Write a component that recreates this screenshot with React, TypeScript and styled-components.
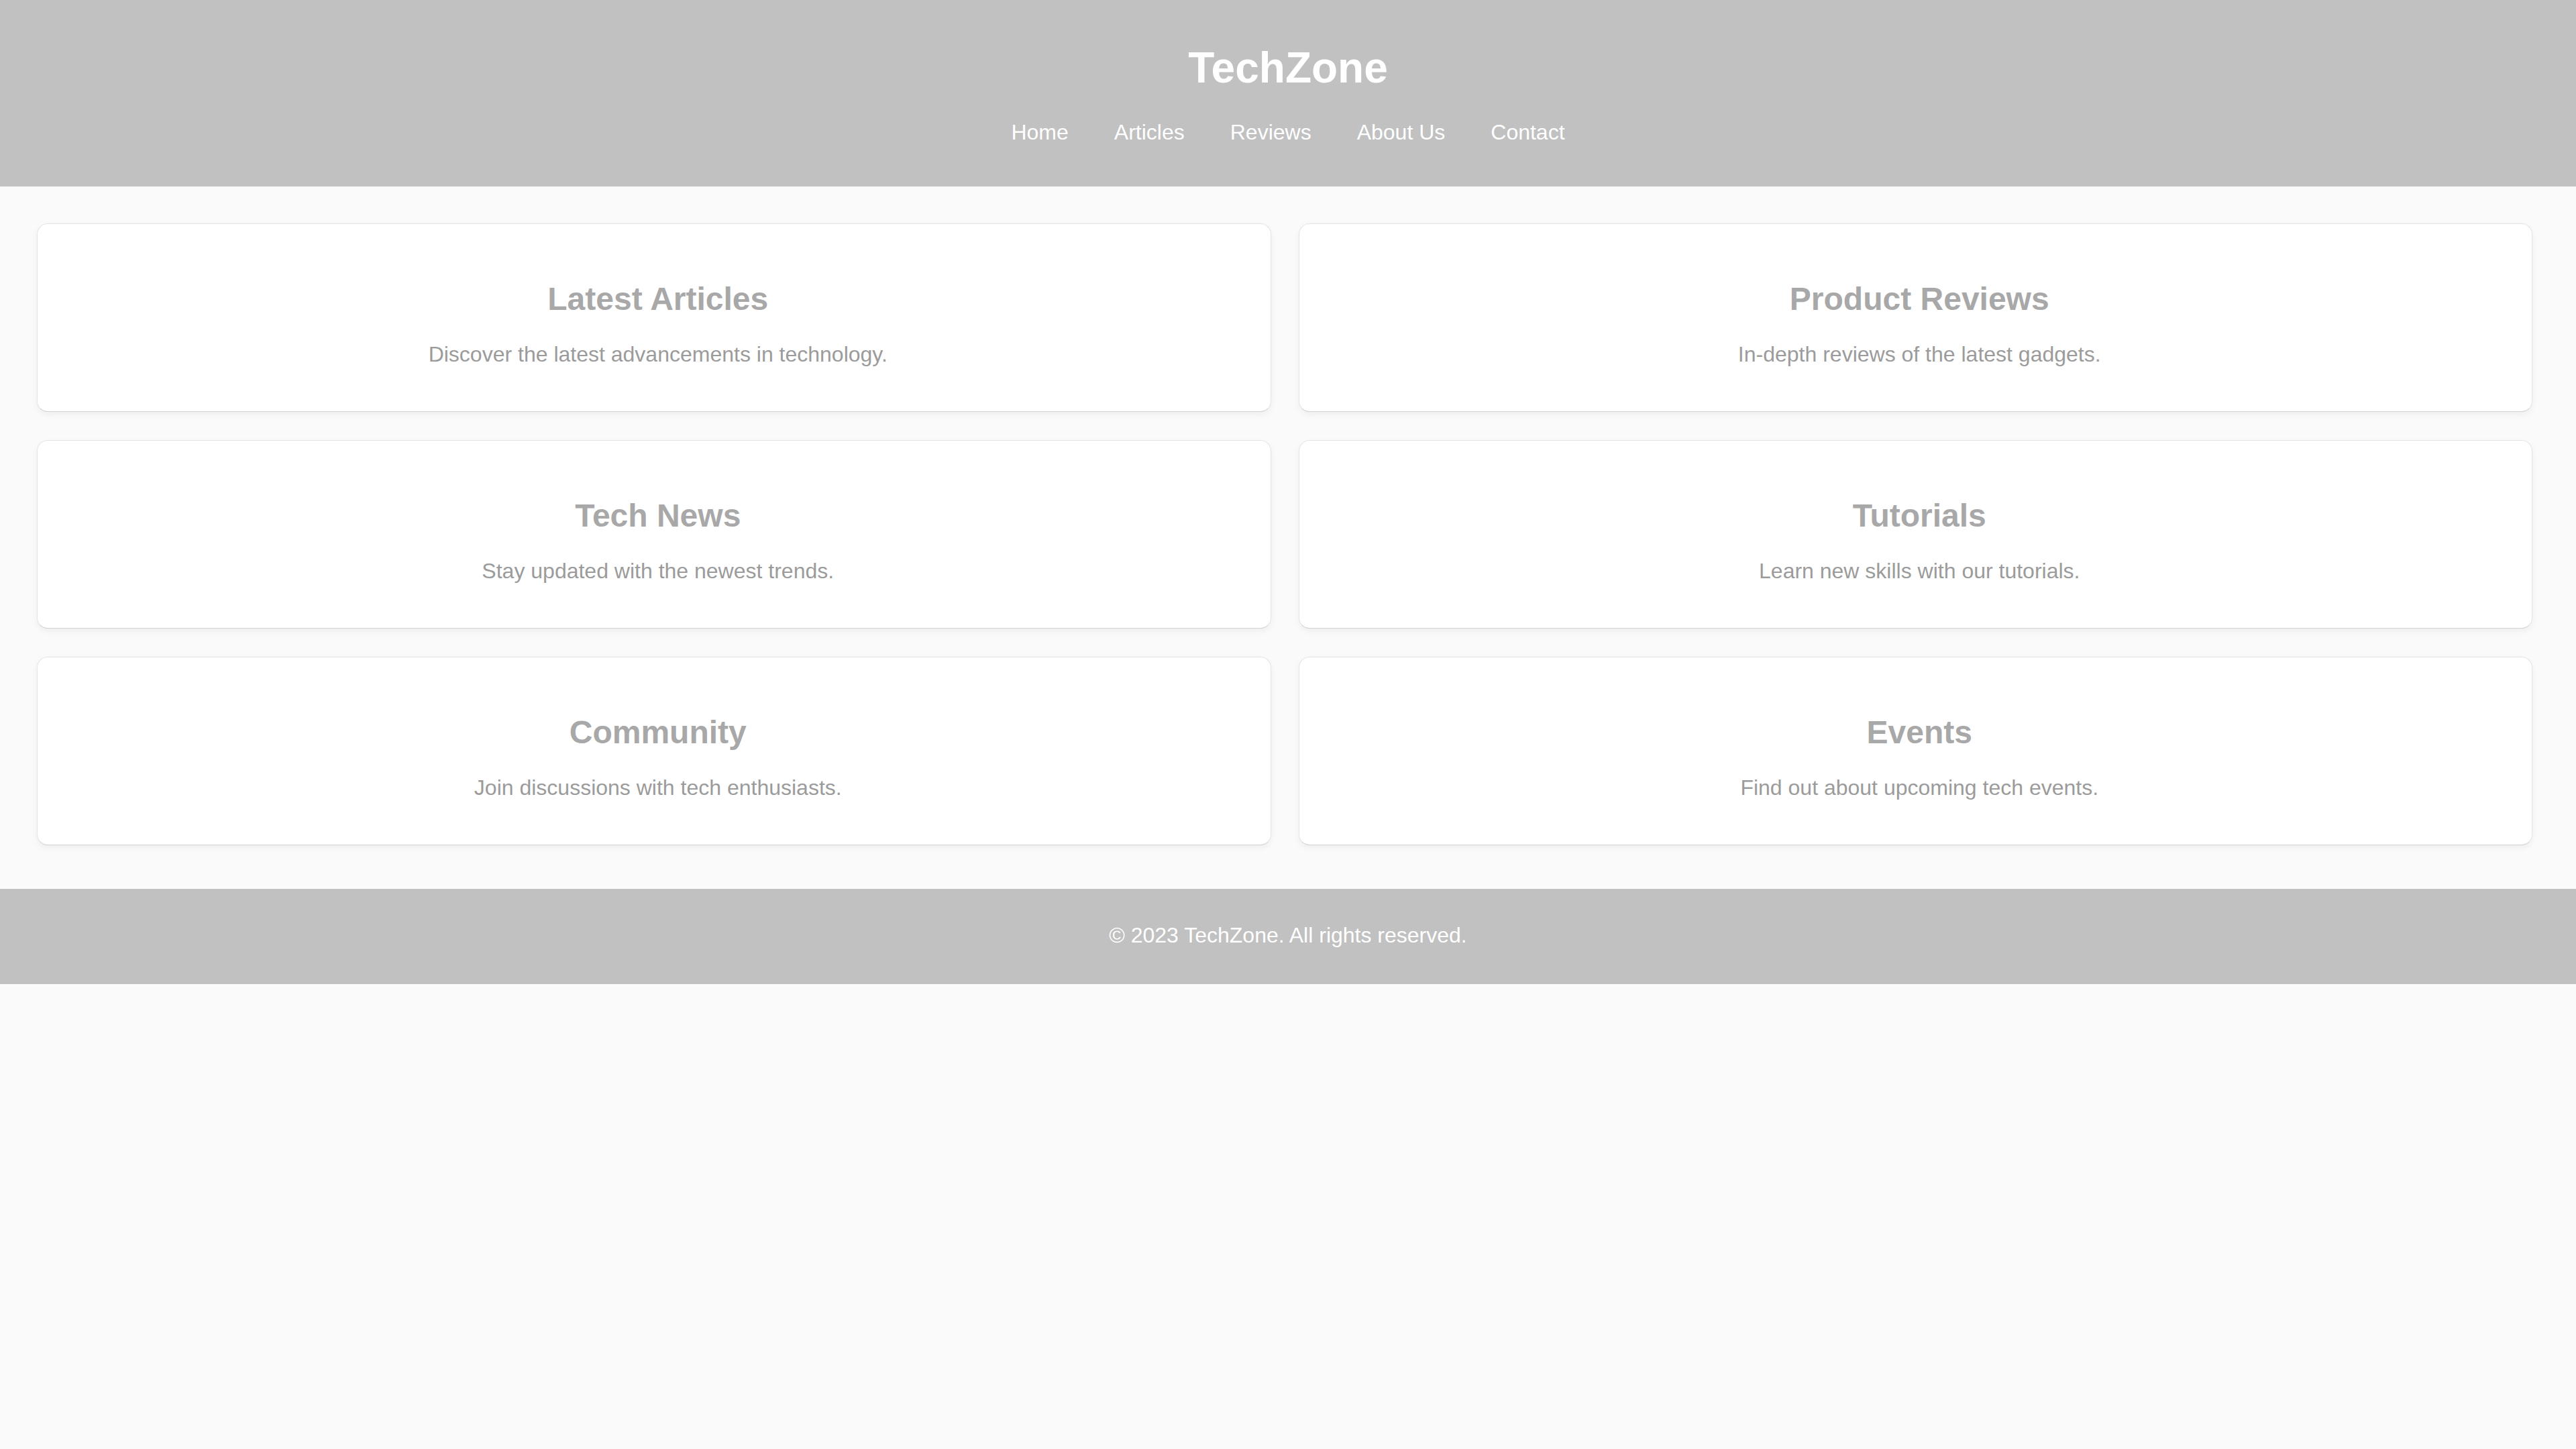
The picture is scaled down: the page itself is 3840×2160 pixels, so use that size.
import styled, { createGlobalStyle } from "styled-components";

const GlobalStyle = createGlobalStyle`
  html, body {
    margin: 0;
    padding: 0;
    background-color: #fafafa;
    font-family: "Liberation Sans", Arial, sans-serif;
  }
`;

const Header = styled.header`
  background-color: #c1c1c1;
  color: #ffffff;
  text-align: center;
  padding: 64px 0 62px;
`;

const Title = styled.h1`
  margin: 0 0 41px;
  font-size: 64px;
  font-weight: 700;
`;

const Nav = styled.nav`
  display: flex;
  justify-content: center;
  gap: 68px;
`;

const NavLink = styled.a`
  color: #ffffff;
  font-size: 32px;
  text-decoration: none;
  cursor: pointer;
`;

const Main = styled.main`
  display: grid;
  grid-template-columns: 1fr 1fr;
  gap: 42px 41px;
  padding: 55px 65px 65px 55px;
`;

const Card = styled.section`
  background-color: #ffffff;
  border: 1px solid #e4e4e4;
  border-bottom-color: #d2d2d2;
  border-radius: 16px;
  box-shadow: 0 4px 10px rgba(0, 0, 0, 0.05);
  padding: 84px 47px 66px 59px;
  text-align: center;
`;

const CardTitle = styled.h2`
  margin: 0 0 37px;
  font-size: 48px;
  font-weight: 700;
  color: #a8a8a8;
`;

const CardText = styled.p`
  margin: 0;
  font-size: 32px;
  color: #9b9b9b;
`;

const Footer = styled.footer`
  background-color: #c1c1c1;
  color: #ffffff;
  text-align: center;
  font-size: 32px;
  padding: 51px 0 54px;
`;

const links = ["Home", "Articles", "Reviews", "About Us", "Contact"];

const sections = [
  { title: "Latest Articles", text: "Discover the latest advancements in technology." },
  { title: "Product Reviews", text: "In-depth reviews of the latest gadgets." },
  { title: "Tech News", text: "Stay updated with the newest trends." },
  { title: "Tutorials", text: "Learn new skills with our tutorials." },
  { title: "Community", text: "Join discussions with tech enthusiasts." },
  { title: "Events", text: "Find out about upcoming tech events." },
];

export default function App() {
  return (
    <>
      <GlobalStyle />
      <Header>
        <Title>TechZone</Title>
        <Nav>
          {links.map((link) => (
            <NavLink key={link}>{link}</NavLink>
          ))}
        </Nav>
      </Header>
      <Main>
        {sections.map((s) => (
          <Card key={s.title}>
            <CardTitle>{s.title}</CardTitle>
            <CardText>{s.text}</CardText>
          </Card>
        ))}
      </Main>
      <Footer>© 2023 TechZone. All rights reserved.</Footer>
    </>
  );
}
